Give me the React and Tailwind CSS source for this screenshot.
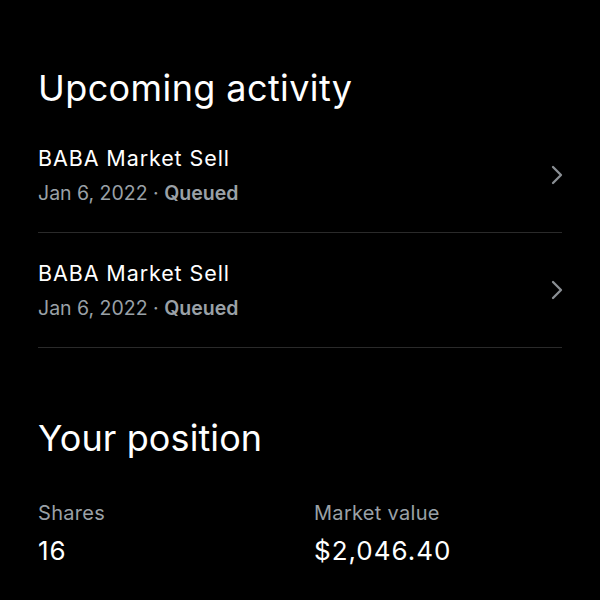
const ACTIVITY = [
  { id: 1, title: 'BABA Market Sell', date: 'Jan 6, 2022', status: 'Queued' },
  { id: 2, title: 'BABA Market Sell', date: 'Jan 6, 2022', status: 'Queued' },
];

function Chevron() {
  return (
    <svg width="12" height="20" viewBox="0 0 12 20" fill="none" className="mr-[-1px]">
      <path d="M2 2 L10 10 L2 18" stroke="#8a8f94" strokeWidth="2.3" strokeLinecap="round" strokeLinejoin="round" />
    </svg>
  );
}

export default function App() {
  return (
    <div className="w-[600px] h-[600px] bg-black text-white overflow-hidden px-[38px]" style={{ fontFamily: 'Inter, "Noto Sans", sans-serif' }}>
      <h2 className="pt-[66px] text-[36px] leading-[44px] tracking-[0.4px]">Upcoming activity</h2>

      <div className="mt-[8px]">
        {ACTIVITY.map(a => (
          <div key={a.id} className="flex items-center justify-between border-b border-[#2a2a2a] pt-[26px] pb-[26px]">
            <div>
              <p className="text-[21.5px] leading-[28px] tracking-[0.9px]">{a.title}</p>
              <p className="text-[19.5px] leading-[26px] mt-[8px] text-[#9aa1a7]">
                {a.date} · <span className="font-semibold">{a.status}</span>
              </p>
            </div>
            <Chevron />
          </div>
        ))}
      </div>

      <h2 className="mt-[68px] text-[36px] leading-[44px] tracking-[0.1px]">Your position</h2>

      <div className="flex mt-[40px]">
        <div className="w-[276px]">
          <p className="text-[20px] leading-[26px] text-[#9aa1a7] tracking-[0.3px]">Shares</p>
          <p className="text-[26px] leading-[32px] mt-[9px] tracking-[1px]">16</p>
        </div>
        <div>
          <p className="text-[20px] leading-[26px] text-[#9aa1a7] tracking-[0.3px]">Market value</p>
          <p className="text-[26px] leading-[32px] mt-[9px] tracking-[1px]">$2,046.40</p>
        </div>
      </div>
    </div>
  );
}
